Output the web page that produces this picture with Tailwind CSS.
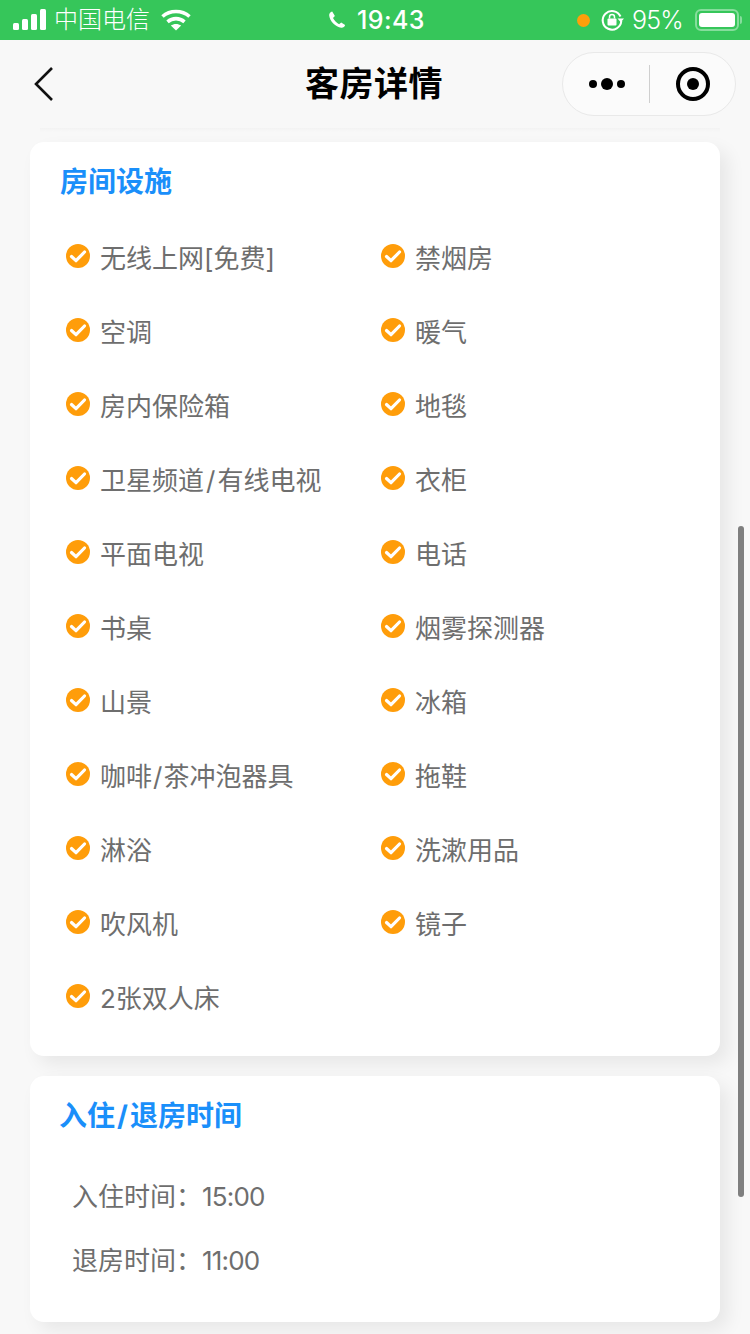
<!DOCTYPE html>
<html>
<head>
    <meta charset="UTF-8">
    <title>客房详情</title>
    <script src="https://cdn.jsdelivr.net/npm/@tailwindcss/browser@4"></script>
</head>
<body>
    <svg class="hidden">
        <symbol id="check" viewBox="0 0 24 24">
            <circle cx="12" cy="12" r="12" fill="#ff9d0a"/>
            <path d="M5.500 12.500l4.500 4.200L18.500 8" fill="none" stroke="#fff" stroke-width="3.200" stroke-linecap="round" stroke-linejoin="round"/>
        </symbol>
    </svg>
    <div class="relative w-[750px] h-[1334px] overflow-hidden bg-[#f8f8f8] font-['Inter','Noto_Sans_CJK_SC',sans-serif]">
        <!-- status bar -->
        <div class="h-[40px] bg-[#36c65a] flex items-center text-white relative">
            <div class="flex items-center pl-[13px] gap-[7px] w-[300px]">
                <svg width="34" height="22" viewBox="0 0 34 22" fill="#fff">
                    <rect x="0" y="14" width="6" height="7" rx="1.5"/>
                    <rect x="9" y="10" width="6" height="11" rx="1.5"/>
                    <rect x="18" y="5" width="6" height="16" rx="1.5"/>
                    <rect x="27" y="0" width="6" height="21" rx="1.5"/>
                </svg>
                <span class="text-[24px] leading-[30px] font-light">中国电信</span>
                <svg width="30" height="22" viewBox="0 0 30 22" fill="none" stroke="#fff" stroke-width="3.600" class="ml-[4px]">
                    <path d="M1.500 7.500C9 .8 21 .8 28.500 7.500"/>
                    <path d="M6.500 12.800C11.500 8.600 18.500 8.600 23.500 12.800"/>
                    <path d="M15 21.500L9.800 16.600C12.800 14.400 17.200 14.400 20.200 16.600Z" fill="#fff" stroke="none"/>
                </svg>
            </div>
            <div class="absolute left-[328px] top-0 h-[40px] flex items-center gap-[11px]">
                <svg width="18" height="18" viewBox="0 0 18 18" fill="#fff">
                    <path d="M4.200.6C2.400 1.200 1 2.600 1.200 4.600c.5 5.600 6.400 11.600 12 12.200 2 .2 3.400-1 3.900-2.800l-3.900-2.600-2.100 1.800C8.600 11.900 6.200 9.500 5 7.100l1.900-2.200Z"/>
                </svg>
                <span class="text-[25px] leading-[30px] tracking-[0.4px] font-medium">19:43</span>
            </div>
            <div class="ml-auto flex items-center pr-[8px]">
                <span class="w-[13px] h-[13px] rounded-full bg-[#ff9f0a] mr-[10px]"></span>
                <svg width="24" height="24" viewBox="0 0 24 24" fill="none" class="mr-[8px]">
                    <path d="M20.500 8.500A9.300 9.300 0 1 0 21.300 13" stroke="#fff" stroke-width="2"/>
                    <path d="M17.500 10.500h6.500l-3.200 3.800Z" fill="#fff"/>
                    <rect x="7.500" y="10.500" width="9" height="7" rx="1" fill="#fff"/>
                    <path d="M9.500 10.500V9a2.500 2.500 0 0 1 5 0v1.500" stroke="#fff" stroke-width="1.500"/>
                </svg>
                <span class="text-[25px] leading-[30px] font-light tracking-[-0.8px] mr-[12px]">95%</span>
                <div class="w-[44px] h-[22px] rounded-[6px] border-2 border-white/40 p-[2px]">
                    <div class="w-[36px] h-[14px] rounded-[3px] bg-white"></div>
                </div>
                <div class="w-[2px] h-[8px] rounded-r bg-white/40 ml-[1px]"></div>
            </div>
        </div>

        <!-- nav bar -->
        <div class="h-[88px] relative flex items-center justify-center">
            <svg width="20" height="36" viewBox="0 0 20 36" fill="none" stroke="#111" stroke-width="2.600" class="absolute left-[34px] top-[26px]">
                <path d="M18 2L2 18L18 34"/>
            </svg>
            <span class="text-[34px] leading-[44px] font-bold text-black -ml-[2px] tracking-[0.5px]">客房详情</span>
            <div class="absolute left-[562px] top-[12px] w-[174px] h-[64px] rounded-full bg-[#fbfbfb] border border-[#e9e9e9] flex items-center">
                <div class="w-[86px] pl-[2px] flex items-center justify-center gap-[4px]">
                    <span class="w-[8px] h-[8px] rounded-full bg-black"></span>
                    <span class="w-[12px] h-[12px] rounded-full bg-black"></span>
                    <span class="w-[8px] h-[8px] rounded-full bg-black"></span>
                </div>
                <div class="w-px h-[38px] bg-[#cfcfcf]"></div>
                <div class="flex-1 flex items-center justify-center">
                    <div class="w-[34px] h-[34px] rounded-full border-[4px] border-black flex items-center justify-center">
                        <span class="w-[12px] h-[12px] rounded-full bg-black"></span>
                    </div>
                </div>
            </div>
        </div>
        <!-- shadow of the card scrolled out above -->
        <div class="absolute left-[40px] top-[128px] w-[680px] h-[4px] bg-gradient-to-b from-[#f3f3f3] to-[#f8f8f8]"></div>

        <!-- content -->
        <div class="px-[30px] pt-[14px] flex flex-col gap-[20px]">
            <div class="h-[914px] bg-white rounded-[14px] shadow-[8px_8px_18px_rgba(0,0,0,0.07)] pt-[20px] pl-[30px]">
                <h2 class="text-[28px] leading-[40px] font-bold text-[#1a8ffa]">房间设施</h2>
                <div class="grid grid-cols-[315px_1fr] auto-rows-[74px] mt-[40px] pl-[6px] text-[26px] leading-[34px] text-[#6e6e6e]">
                    <div class="flex items-start gap-[10px]"><svg class="mt-[2px] shrink-0" width="24" height="24"><use href="#check"/></svg><span>无线上网[免费]</span></div>
                    <div class="flex items-start gap-[10px]"><svg class="mt-[2px] shrink-0" width="24" height="24"><use href="#check"/></svg><span>禁烟房</span></div>
                    <div class="flex items-start gap-[10px]"><svg class="mt-[2px] shrink-0" width="24" height="24"><use href="#check"/></svg><span>空调</span></div>
                    <div class="flex items-start gap-[10px]"><svg class="mt-[2px] shrink-0" width="24" height="24"><use href="#check"/></svg><span>暖气</span></div>
                    <div class="flex items-start gap-[10px]"><svg class="mt-[2px] shrink-0" width="24" height="24"><use href="#check"/></svg><span>房内保险箱</span></div>
                    <div class="flex items-start gap-[10px]"><svg class="mt-[2px] shrink-0" width="24" height="24"><use href="#check"/></svg><span>地毯</span></div>
                    <div class="flex items-start gap-[10px]"><svg class="mt-[2px] shrink-0" width="24" height="24"><use href="#check"/></svg><span>卫星频道<span class="mx-[2px]">/</span>有线电视</span></div>
                    <div class="flex items-start gap-[10px]"><svg class="mt-[2px] shrink-0" width="24" height="24"><use href="#check"/></svg><span>衣柜</span></div>
                    <div class="flex items-start gap-[10px]"><svg class="mt-[2px] shrink-0" width="24" height="24"><use href="#check"/></svg><span>平面电视</span></div>
                    <div class="flex items-start gap-[10px]"><svg class="mt-[2px] shrink-0" width="24" height="24"><use href="#check"/></svg><span>电话</span></div>
                    <div class="flex items-start gap-[10px]"><svg class="mt-[2px] shrink-0" width="24" height="24"><use href="#check"/></svg><span>书桌</span></div>
                    <div class="flex items-start gap-[10px]"><svg class="mt-[2px] shrink-0" width="24" height="24"><use href="#check"/></svg><span>烟雾探测器</span></div>
                    <div class="flex items-start gap-[10px]"><svg class="mt-[2px] shrink-0" width="24" height="24"><use href="#check"/></svg><span>山景</span></div>
                    <div class="flex items-start gap-[10px]"><svg class="mt-[2px] shrink-0" width="24" height="24"><use href="#check"/></svg><span>冰箱</span></div>
                    <div class="flex items-start gap-[10px]"><svg class="mt-[2px] shrink-0" width="24" height="24"><use href="#check"/></svg><span>咖啡<span class="mx-[1px]">/</span>茶冲泡器具</span></div>
                    <div class="flex items-start gap-[10px]"><svg class="mt-[2px] shrink-0" width="24" height="24"><use href="#check"/></svg><span>拖鞋</span></div>
                    <div class="flex items-start gap-[10px]"><svg class="mt-[2px] shrink-0" width="24" height="24"><use href="#check"/></svg><span>淋浴</span></div>
                    <div class="flex items-start gap-[10px]"><svg class="mt-[2px] shrink-0" width="24" height="24"><use href="#check"/></svg><span>洗漱用品</span></div>
                    <div class="flex items-start gap-[10px]"><svg class="mt-[2px] shrink-0" width="24" height="24"><use href="#check"/></svg><span>吹风机</span></div>
                    <div class="flex items-start gap-[10px]"><svg class="mt-[2px] shrink-0" width="24" height="24"><use href="#check"/></svg><span>镜子</span></div>
                    <div class="flex items-start gap-[10px]"><svg class="mt-[2px] shrink-0" width="24" height="24"><use href="#check"/></svg><span>2张双人床</span></div>
                </div>
            </div>
            <div class="h-[246px] bg-white rounded-[14px] shadow-[8px_8px_18px_rgba(0,0,0,0.07)] pt-[20px] pl-[30px]">
                <h2 class="text-[28px] leading-[40px] font-bold text-[#1a8ffa] -ml-[1px]">入住<span class="mx-[2px]">/</span>退房时间</h2>
                <div class="mt-[44px] pl-[12px] flex flex-col gap-[30px] text-[26px] leading-[34px] text-[#6e6e6e]">
                    <p>入住时间：<span class="tracking-[-0.8px]">15:00</span></p>
                    <p>退房时间：<span class="tracking-[-0.8px]">11:00</span></p>
                </div>
            </div>
        </div>

        <!-- scrollbar -->
        <div class="absolute left-[738px] top-[526px] w-[6px] h-[671px] rounded-full bg-[#7f7f7f]"></div>
    </div>
</body>
</html>
